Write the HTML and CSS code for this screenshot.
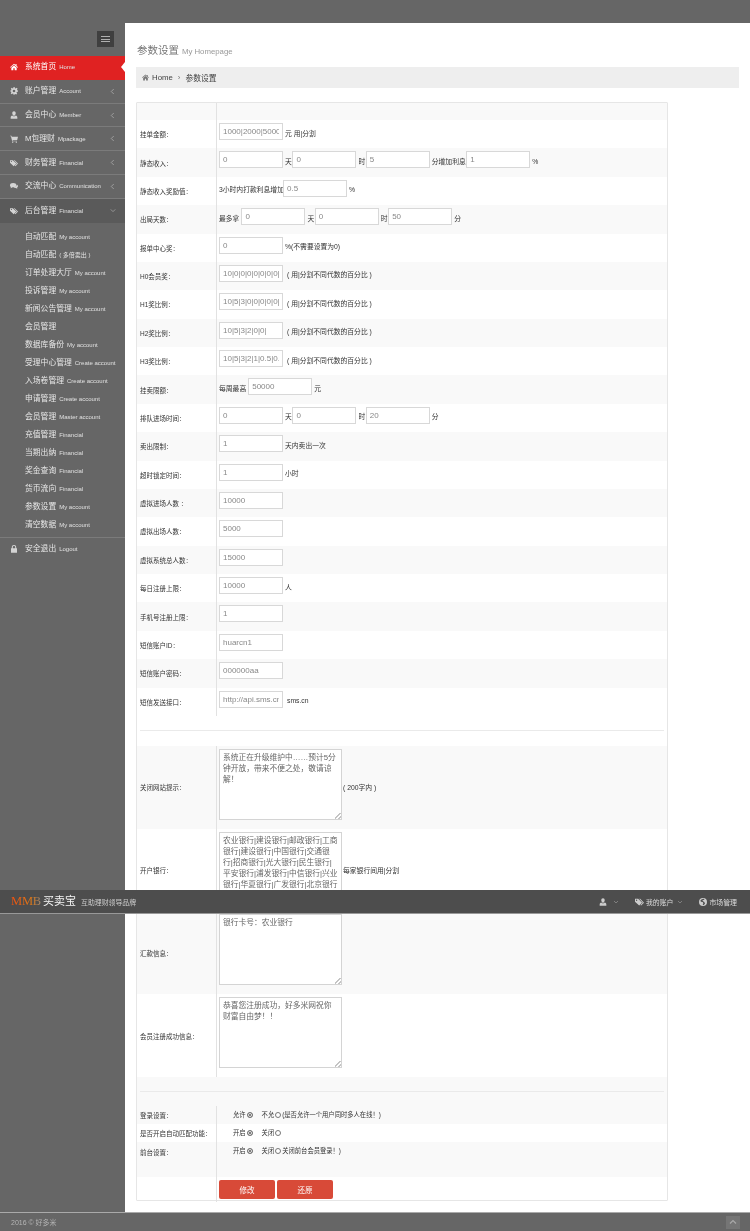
FILE: index.html
```html
<!DOCTYPE html>
<html lang="zh">
<head>
<meta charset="utf-8">
<title>参数设置</title>
<link rel="stylesheet" href="styles.css">
</head>
<body>
<svg width="0" height="0" class="defs">
  <symbol id="i-home" viewBox="0 0 12 12"><path d="M6 1 0 6.200l.7.8L6 2.600 11.300 7l.7-.8L9.800 4.300V1.500H8.300v1.500zM2 7v4h3V8h2v3h3V7L6 3.600z"/></symbol>
  <symbol id="i-gear" viewBox="0 0 12 12"><path fill-rule="evenodd" d="M5 0h2l.3 1.700 1.200.5L10 1.200l1.400 1.400-1 1.500.5 1.200L12 5v2l-1.700.3-.5 1.200 1 1.500L9.400 11.400l-1.500-1-1.200.5L6.500 12h-1l-.3-1.700-1.200-.5-1.500 1L1.100 9.400l1-1.500-.5-1.200L0 6.500v-1l1.700-.3.500-1.200-1-1.500L2.600 1.100l1.500 1 1.200-.5zM6 4a2 2 0 1 0 0 4 2 2 0 0 0 0-4z"/></symbol>
  <symbol id="i-user" viewBox="0 0 12 12"><path d="M6 0.500c1.700 0 2.600 1.300 2.600 3S7.600 7 6 7 3.400 5.200 3.400 3.500 4.300.5 6 .5zM3.500 6.700C4.200 7.500 5 8 6 8s1.800-.5 2.500-1.300c1.700.3 2.500 1.300 2.500 3v1.800H1V9.700c0-1.700.8-2.700 2.500-3z"/></symbol>
  <symbol id="i-cart" viewBox="0 0 12 12"><path d="M0 1h2.200l.4 1.500H12l-1.200 5H3.800l.3 1H10.500v1H3.200L1.400 2H0z"/><circle cx="4" cy="10.800" r="1"/><circle cx="9.500" cy="10.800" r="1"/></symbol>
  <symbol id="i-tags" viewBox="0 0 14 12"><path fill-rule="evenodd" d="M0 1h5l6 6-4.500 4.500L0 5.500zM2.500 2.300a1 1 0 1 0 0 2 1 1 0 0 0 0-2z"/><path d="M6.500 1H8l6 6-4.500 4.500-1-1L12 7z"/></symbol>
  <symbol id="i-comments" viewBox="0 0 14 12"><ellipse cx="5.500" cy="4.500" rx="5.500" ry="3.800"/><path d="M2 7l-1 3 3.500-2z"/><path d="M12 3.500c1.300.7 2 1.700 2 2.800 0 1.100-.7 2-1.800 2.700l.8 2-3-1.500c-1.500 0-3-.5-3.800-1.300 3.200 0 5.800-2 5.800-4.700z"/></symbol>
  <symbol id="i-lock" viewBox="0 0 12 12"><path fill-rule="evenodd" d="M6 0c2 0 3.300 1.300 3.300 3.300V5H10.500v6.500h-9V5h1.200V3.300C2.700 1.300 4 0 6 0zm0 1.500c-1.100 0-1.800.7-1.800 1.900V5h3.600V3.400C7.800 2.200 7.100 1.500 6 1.500z"/></symbol>
  <symbol id="i-globe" viewBox="0 0 12 12"><path fill-rule="evenodd" d="M6 0a6 6 0 1 1 0 12A6 6 0 0 1 6 0zM3 2.500 2 4.500l2 1.500 1.500 0 1 2-1 2.500h1.500L9 8.500 8 6 6 5 5 3.500 7 3 8.500 1.800 6.500 1.200z"/></symbol>
  <symbol id="i-left" viewBox="0 0 6 8"><path d="M4.500 1 1.500 4l3 3" fill="none" stroke="currentColor" stroke-width="1"/></symbol>
  <symbol id="i-down" viewBox="0 0 8 6"><path d="M1 1.500 4 4.500l3-3" fill="none" stroke="currentColor" stroke-width="1"/></symbol>
</svg>

<div class="page">
  <aside class="sidebar">
    <div class="toggler-row"><div class="toggler"><span></span><span></span><span></span></div></div>
    <ul class="menu">
      <li class="item active"><svg class="ico"><use href="#i-home"/></svg><span class="cn">系统首页</span><span class="en">Home</span><span class="notch"></span></li>
      <li class="item"><svg class="ico"><use href="#i-gear"/></svg><span class="cn">账户管理</span><span class="en">Account</span><svg class="arrow"><use href="#i-left"/></svg></li>
      <li class="item"><svg class="ico"><use href="#i-user"/></svg><span class="cn">会员中心</span><span class="en">Member</span><svg class="arrow"><use href="#i-left"/></svg></li>
      <li class="item"><svg class="ico"><use href="#i-cart"/></svg><span class="cn">M包理财</span><span class="en">Mpackage</span><svg class="arrow"><use href="#i-left"/></svg></li>
      <li class="item"><svg class="ico"><use href="#i-tags"/></svg><span class="cn">财务管理</span><span class="en">Financial</span><svg class="arrow"><use href="#i-left"/></svg></li>
      <li class="item"><svg class="ico"><use href="#i-comments"/></svg><span class="cn">交流中心</span><span class="en">Communication</span><svg class="arrow"><use href="#i-left"/></svg></li>
      <li class="item open"><svg class="ico"><use href="#i-tags"/></svg><span class="cn">后台管理</span><span class="en">Financial</span><svg class="arrow down"><use href="#i-down"/></svg></li>
    </ul>
    <ul class="submenu">
      <li><span class="cn">自动匹配</span><span class="en">My account</span></li>
      <li><span class="cn">自动匹配</span><span class="en">( 多倍卖出 )</span></li>
      <li><span class="cn">订单处理大厅</span><span class="en">My account</span></li>
      <li><span class="cn">投诉管理</span><span class="en">My account</span></li>
      <li><span class="cn">新闻公告管理</span><span class="en">My account</span></li>
      <li><span class="cn">会员管理</span></li>
      <li><span class="cn">数据库备份</span><span class="en">My account</span></li>
      <li><span class="cn">受理中心管理</span><span class="en">Create account</span></li>
      <li><span class="cn">入场卷管理</span><span class="en">Create account</span></li>
      <li><span class="cn">申请管理</span><span class="en">Create account</span></li>
      <li><span class="cn">会员管理</span><span class="en">Master account</span></li>
      <li><span class="cn">充值管理</span><span class="en">Financial</span></li>
      <li><span class="cn">当期出纳</span><span class="en">Financial</span></li>
      <li><span class="cn">奖金查询</span><span class="en">Financial</span></li>
      <li><span class="cn">货币流向</span><span class="en">Financial</span></li>
      <li><span class="cn">参数设置</span><span class="en">My account</span></li>
      <li><span class="cn">清空数据</span><span class="en">My account</span></li>
    </ul>
    <div class="item logout"><svg class="ico"><use href="#i-lock"/></svg><span class="cn">安全退出</span><span class="en">Logout</span></div>
  </aside>

  <main class="content">
    <h1 class="title">参数设置 <small>My Homepage</small></h1>
    <div class="crumb"><svg class="crumb-ico"><use href="#i-home"/></svg><span>Home</span><span class="sep">›</span><span>参数设置</span></div>

    <form class="panel">
      <div class="row head"><div class="lab"></div><div class="val"></div></div>
      <div class="row"><div class="lab">挂单金额：</div><div class="val"><input value="1000|2000|5000"><span class="t">元 用|分割</span></div></div>
      <div class="row alt"><div class="lab">静态收入：</div><div class="val"><input value="0"><span class="t">天</span><input value="0"><span class="t">时</span><input value="5"><span class="t">分增加利息</span><input value="1"><span class="t">%</span></div></div>
      <div class="row"><div class="lab">静态收入奖励值：</div><div class="val"><span class="t tight">3小时内打款利息增加</span><input value="0.5"><span class="t">%</span></div></div>
      <div class="row alt"><div class="lab">出局天数：</div><div class="val"><span class="t first">最多拿</span><input value="0"><span class="t">天</span><input value="0"><span class="t">时</span><input value="50"><span class="t">分</span></div></div>
      <div class="row"><div class="lab">报单中心奖：</div><div class="val"><input value="0"><span class="t">%(不需要设置为0)</span></div></div>
      <div class="row alt"><div class="lab">H0会员奖：</div><div class="val"><input value="10|0|0|0|0|0|0|0|0"><span class="t wide">( 用|分割不同代数的百分比 )</span></div></div>
      <div class="row"><div class="lab">H1奖比例：</div><div class="val"><input value="10|5|3|0|0|0|0|0|0"><span class="t wide">( 用|分割不同代数的百分比 )</span></div></div>
      <div class="row alt"><div class="lab">H2奖比例：</div><div class="val"><input value="10|5|3|2|0|0|"><span class="t wide">( 用|分割不同代数的百分比 )</span></div></div>
      <div class="row"><div class="lab">H3奖比例：</div><div class="val"><input value="10|5|3|2|1|0.5|0.5"><span class="t wide">( 用|分割不同代数的百分比 )</span></div></div>
      <div class="row alt"><div class="lab">挂卖限额：</div><div class="val"><span class="t first">每周最高</span><input value="50000"><span class="t">元</span></div></div>
      <div class="row"><div class="lab">排队进场时间：</div><div class="val"><input value="0"><span class="t">天</span><input value="0"><span class="t">时</span><input value="20"><span class="t">分</span></div></div>
      <div class="row alt"><div class="lab">卖出限制：</div><div class="val"><input value="1"><span class="t">天内卖出一次</span></div></div>
      <div class="row"><div class="lab">超时锁定时间：</div><div class="val"><input value="1"><span class="t">小时</span></div></div>
      <div class="row alt"><div class="lab">虚拟进场人数 ：</div><div class="val"><input value="10000"></div></div>
      <div class="row"><div class="lab">虚拟出场人数：</div><div class="val"><input value="5000"></div></div>
      <div class="row alt"><div class="lab">虚拟系统总人数：</div><div class="val"><input value="15000"></div></div>
      <div class="row"><div class="lab">每日注册上限：</div><div class="val"><input value="10000"><span class="t">人</span></div></div>
      <div class="row alt"><div class="lab">手机号注册上限：</div><div class="val"><input value="1"></div></div>
      <div class="row"><div class="lab">短信账户ID：</div><div class="val"><input value="huarcn1"></div></div>
      <div class="row alt"><div class="lab">短信账户密码：</div><div class="val"><input value="000000aa"></div></div>
      <div class="row"><div class="lab">短信发送接口：</div><div class="val"><input value="http://api.sms.cn"><span class="t wide">sms.cn</span></div></div>

      <div class="divider first-div"><hr></div>

      <div class="row tall alt"><div class="lab">关闭网站提示：</div><div class="val"><textarea>系统正在升级维护中……预计5分钟开放，带来不便之处，敬请谅解！</textarea><span class="t">( 200字内 )</span></div></div>
      <div class="row tall"><div class="lab">开户银行：</div><div class="val"><textarea>农业银行|建设银行|邮政银行|工商银行|建设银行|中国银行|交通银行|招商银行|光大银行|民生银行|平安银行|浦发银行|中信银行|兴业银行|华夏银行|广发银行|北京银行</textarea><span class="t">每家银行间用|分割</span></div></div>
      <div class="row tall alt"><div class="lab">汇款信息：</div><div class="val"><textarea>银行卡号：农业银行</textarea></div></div>
      <div class="row tall"><div class="lab">会员注册成功信息：</div><div class="val"><textarea>恭喜您注册成功，好多米网祝你财富自由梦！！</textarea></div></div>

      <div class="divider second-div"><hr></div>

      <div class="row short alt"><div class="lab">登录设置：</div><div class="val radios"><label class="opt">允许<input type="radio" name="login" checked></label><label class="opt">不允<input type="radio" name="login">(是否允许一个用户同时多人在线！)</label></div></div>
      <div class="row short"><div class="lab">是否开启自动匹配功能：</div><div class="val radios"><label class="opt">开启<input type="radio" name="auto" checked></label><label class="opt">关闭<input type="radio" name="auto"></label></div></div>
      <div class="row short-tall alt"><div class="lab">前台设置：</div><div class="val radios"><label class="opt">开启<input type="radio" name="front" checked></label><label class="opt">关闭<input type="radio" name="front">关闭前台会员登录！)</label></div></div>
      <div class="row btn-row"><div class="lab"></div><div class="val"><button type="submit" class="btn">修改</button><button type="reset" class="btn">还原</button></div></div>
    </form>
  </main>

  <footer class="footer"><span>2016 © 好多米</span><span class="totop"><svg class="totop-ico" viewBox="0 0 8 6"><path d="M1 4.500 4 1.500l3 3" fill="none" stroke="#a8a8a8" stroke-width="1.200"/></svg></span></footer>

  <header class="topbar">
    <div class="brand"><span class="mmb">MMB</span><span class="brand-cn">买卖宝</span><span class="slogan">互助理财领导品牌</span></div>
    <nav class="topnav">
      <span class="nav-item"><svg class="nav-ico"><use href="#i-user"/></svg><svg class="nav-arrow"><use href="#i-down"/></svg></span>
      <span class="nav-item"><svg class="nav-ico wide-ico"><use href="#i-tags"/></svg>我的账户<svg class="nav-arrow"><use href="#i-down"/></svg></span>
      <span class="nav-item"><svg class="nav-ico"><use href="#i-globe"/></svg>市场管理</span>
    </nav>
  </header>
</div>
</body>
</html>
```

FILE: styles.css
```css
* { box-sizing: border-box; }
html, body { margin: 0; padding: 0; }
body { background: #666; font-family: "Liberation Sans", "Noto Sans CJK SC", sans-serif; color: #333; }
ul { list-style: none; margin: 0; padding: 0; }
.defs { position: absolute; }

.page { position: relative; width: 750px; height: 1231px; overflow: hidden; display: grid; grid-template-columns: 125px 625px; grid-template-rows: 23px 1189px 19px; background: #666; filter: blur(.35px); }

/* sidebar */
.sidebar { grid-column: 1; grid-row: 2; display: flex; flex-direction: column; color: #e6e6e6; }
.toggler-row { height: 33px; padding: 8px 11px 0 0; display: flex; justify-content: flex-end; }
.toggler { width: 17px; height: 16px; background: #3f3f3f; display: flex; flex-direction: column; gap: 1.500px; align-items: center; justify-content: center; }
.toggler span { display: block; width: 9px; height: 1px; background: #b0b0b0; }
.menu { display: flex; flex-direction: column; }
.item { position: relative; height: 23.800px; display: flex; align-items: center; padding-left: 10px; border-bottom: 1px solid #7b7b7b; }
.item.active { background: #e02222; color: #fff; border-bottom-color: #e02222; }
.item.open { background: #5a5a5a; border-bottom: 0; }
.ico { width: 8px; height: 8px; fill: #d4d4d4; flex: none; margin-right: 7px; }
.active .ico { fill: #fff; }
.cn { font-size: 7.800px; line-height: 10px; }
.en { font-size: 6px; margin-left: 3px; line-height: 10px; color: #e0e0e0; }
.arrow { position: absolute; right: 10px; top: 8px; width: 5px; height: 7px; color: #a8a8a8; }
.arrow.down { right: 9px; top: 9px; width: 6px; height: 5px; }
.notch { position: absolute; right: 0; top: 6px; border: 5.500px solid transparent; border-right: 4px solid #fff; border-left: 0; }
.submenu { padding: 5px 0 3px; border-bottom: 1px solid #7b7b7b; }
.submenu li { height: 18px; padding-left: 25px; display: flex; align-items: center; }
.logout { border-bottom: 0; height: 22px; }

/* content */
.content { grid-column: 2; grid-row: 2; background: #fff; padding: 22px 11px 0; display: flex; flex-direction: column; position: relative; }
.title { margin: 0 0 11px; padding-left: 1px; height: 11px; font-weight: 400; font-size: 10.500px; line-height: 11px; color: #777; }
.title small { font-size: 7.800px; color: #999; }
.crumb { height: 21px; width: 603px; background: #eee; display: flex; align-items: center; padding-left: 6px; font-size: 7.800px; color: #444; }
.crumb-ico { width: 7px; height: 7px; fill: #777; margin-right: 3px; }
.sep { margin: 0 5px; color: #777; }

.panel { margin: 14px 0 0; width: 532px; height: 1099px; border: 1px solid #e6e6e6; border-radius: 1px; color: #333; font-size: 6.800px; display: flex; flex-direction: column; }
.row { display: flex; height: 28.380px; flex: none; align-items: stretch; }
.row.head { height: 17px; background: #f9f9f9; }
.row.alt { background: #f9f9f9; }
.row.tall { height: 82.800px; }
.row.short { height: 18px; }
.row.short-tall { height: 35px; }
.row.btn-row { height: 25px; }
.lab { width: 80px; flex: none; display: flex; align-items: center; padding-left: 3px; border-right: 1px solid #e2e2e2; color: #333; font-size: 6.500px; white-space: nowrap; }
.val { flex: 1; display: flex; align-items: flex-start; padding: 3px 0 0 2px; min-width: 0; white-space: nowrap; }
.val input:not([type]) { display: block; width: 64px; height: 17px; flex: none; margin: 0; border: 1px solid #d8d8d8; border-radius: 0; outline: 0; background: #fff; padding: 0 3px; font: 8px "Liberation Sans", "Noto Sans CJK SC", sans-serif; color: #888; }
.t { margin: 0 .6px 0 2px; flex: none; line-height: 17px; padding-top: 1.500px; }
.t.first { margin: 0 2px 0 0; }
.t.tight { margin: 0 -1px 0 0; }
.t.wide { margin-left: 4px; }

textarea { display: block; width: 123px; height: 71px; flex: none; margin: 0; border: 1px solid #d4d4d4; border-radius: 0; outline: 0; background: #fff; padding: 2px 3px; font: 7.750px/11.200px "Liberation Sans", "Noto Sans CJK SC", sans-serif; color: #666; overflow: hidden; resize: both; }
textarea::-webkit-resizer { background: linear-gradient(135deg, transparent 40%, #c4c4c4 40%, #c4c4c4 55%, transparent 55%, transparent 72%, #c4c4c4 72%, #c4c4c4 87%, transparent 87%) right bottom / 6px 6px no-repeat; }
.row.tall .t { margin-left: 1px; align-self: center; margin-top: -3px; padding-top: 0; }

.divider { flex: none; display: flex; flex-direction: column; justify-content: center; padding: 0 3px; }
.divider hr { margin: 0; border: 0; border-top: 1px solid #eaeaea; width: 100%; }
.first-div { height: 30px; }
.second-div { height: 29px; background: #f9f9f9; }

.val.radios { padding: 4.500px 0 0 16px; gap: 8px; }
.opt { display: inline-flex; align-items: center; font-size: 6.300px; line-height: 8px; }
.opt input { appearance: none; width: 6px; height: 6px; margin: 0 1px; border: 1px solid #777; border-radius: 50%; background: #fff; flex: none; }
.opt input:checked { background: #555; box-shadow: inset 0 0 0 1px #fff; }
.short-tall .lab { align-items: flex-start; padding-top: 5px; }

.btn-row .val { gap: 2px; }
.btn { width: 56px; height: 19px; margin: 0; padding: 0; border: 0; background: #d84a38; color: #fff; border-radius: 2px; display: flex; align-items: center; justify-content: center; font: 7.500px "Liberation Sans", "Noto Sans CJK SC", sans-serif; }

/* footer */
.footer { grid-column: 1 / 3; grid-row: 3; border-top: 1px solid #aaa; background: #666; display: flex; justify-content: space-between; align-items: center; padding: 0 10px 0 11px; font-size: 7px; color: #b5b5b5; }
.totop { width: 14px; height: 13px; background: #757575; display: flex; align-items: center; justify-content: center; }
.totop-ico { width: 8px; height: 6px; }

/* overlay top bar, fixed over the content */
.topbar { position: absolute; left: 0; right: 0; top: 890px; height: 24px; background: #4d4d4d; border-bottom: 1px solid #999; display: flex; align-items: center; justify-content: space-between; padding: 0 13px 0 11px; }
.brand { display: flex; align-items: center; }
.mmb { font-family: "Liberation Serif", serif; font-size: 12.500px; line-height: 1; background: linear-gradient(90deg, #f0500f, #e07a18 65%, #8a8a8a); -webkit-background-clip: text; background-clip: text; color: transparent; width: 32px; letter-spacing: -.2px; }
.brand-cn { color: #f4f4f4; font-size: 11px; width: 38px; font-weight: 400; line-height: 1; }
.slogan { color: #ccc; font-size: 6.900px; }
.topnav { display: flex; align-items: center; color: #ddd; font-size: 6.900px; gap: 16px; }
.nav-item { display: inline-flex; align-items: center; }
.nav-ico { width: 8px; height: 8px; fill: #ccc; margin-right: 2px; }
.nav-ico.wide-ico { width: 9px; }
.nav-arrow { width: 6px; height: 4px; margin-left: 4px; color: #999; }
```
